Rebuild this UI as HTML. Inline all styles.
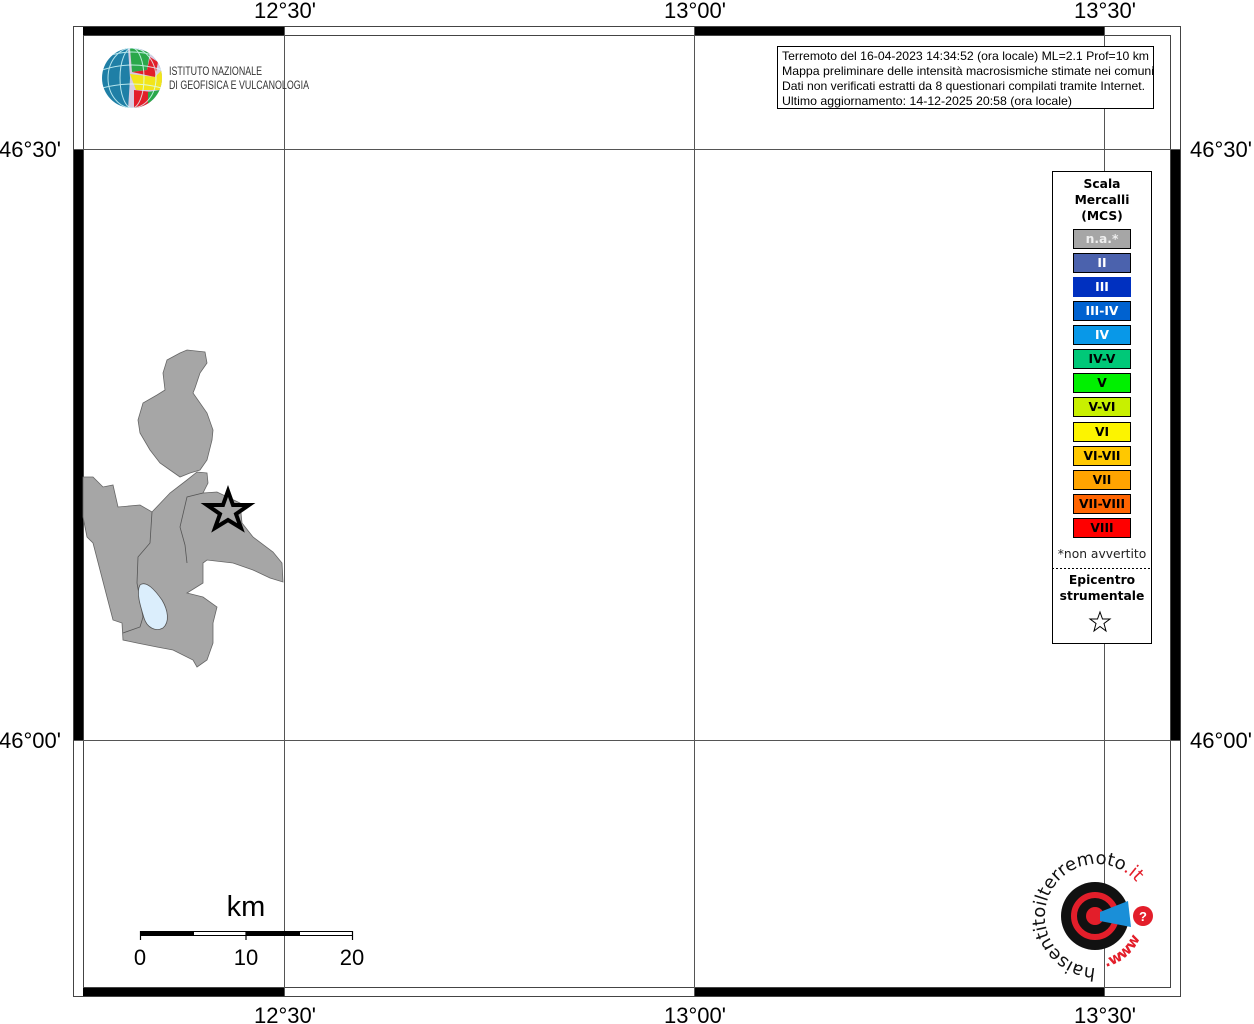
<!DOCTYPE html>
<html><head><meta charset="utf-8"><style>
html,body{margin:0;padding:0;background:#fff;}
svg{display:block;font-family:"Liberation Sans",sans-serif;}
.lg{font-family:"DejaVu Sans",sans-serif;font-weight:bold;font-size:12.3px;text-anchor:middle;}
</style></head><body>
<svg width="1254" height="1024" viewBox="0 0 1254 1024" xmlns="http://www.w3.org/2000/svg">
<rect width="1254" height="1024" fill="#fff"/>
<rect x="73.5" y="26.5" width="1107" height="970" fill="none" stroke="#444" stroke-width="1"/>
<rect x="83.5" y="35.5" width="1087" height="952" fill="none" stroke="#444" stroke-width="1"/>
<rect x="83" y="27" width="201" height="8" fill="#000"/>
<rect x="694" y="27" width="410" height="8" fill="#000"/>
<rect x="83" y="988" width="201" height="8" fill="#000"/>
<rect x="694" y="988" width="410" height="8" fill="#000"/>
<rect x="74" y="149" width="9" height="591" fill="#000"/>
<rect x="1171" y="149" width="9" height="591" fill="#000"/>
<g stroke="#555" stroke-width="1">
<line x1="284.5" y1="27" x2="284.5" y2="996"/>
<line x1="694.5" y1="27" x2="694.5" y2="996"/>
<line x1="1104.5" y1="27" x2="1104.5" y2="996"/>
<line x1="74" y1="149.5" x2="1180" y2="149.5"/>
<line x1="74" y1="740.5" x2="1180" y2="740.5"/>
</g>
<g font-size="22" text-anchor="middle" fill="#000">
<text x="285" y="18">12°30'</text><text x="695" y="18">13°00'</text><text x="1105" y="18">13°30'</text>
<text x="285" y="1023">12°30'</text><text x="695" y="1023">13°00'</text><text x="1105" y="1023">13°30'</text>
</g>
<g font-size="22" fill="#000">
<text x="-1" y="157">46°30'</text><text x="-1" y="748">46°00'</text>
<text x="1190" y="157">46°30'</text><text x="1190" y="748">46°00'</text>
</g>
<g fill="#a6a6a6" stroke="#666" stroke-width="0.8">
<path d="M167,360 L180,353 L187,350 L205,352 L207,363 L200,373 L195,388 L193,393 L207,413 L213,430 L212,440 L207,460 L200,470 L190,473 L180,477 L170,470 L160,463 L150,450 L140,433 L138,420 L143,403 L157,395 L165,390 L163,373 Z"/>
<path d="M83,477 L93,477 L103,487 L113,485 L118,507 L140,505 L152,512 L170,493 L187,480 L197,472 L207,473 L208,483 L203,493 L217,492 L240,503 L242,523 L253,537 L273,552 L282,563 L283,582 L270,578 L253,570 L233,563 L207,560 L203,563 L203,583 L187,593 L203,597 L217,607 L213,623 L213,643 L207,660 L197,667 L193,660 L173,650 L157,647 L137,643 L123,640 L122,623 L113,620 L107,597 L100,570 L93,543 L87,537 L83,517 Z"/>
</g>
<g fill="none" stroke="#555" stroke-width="0.8">
<path d="M152,512 L150,543 L138,557 L137,583 L143,617 L140,627 L123,633"/>
<path d="M203,493 L187,497 L180,527 L185,545 L187,563"/>
</g>
<path d="M140,585 C136,592 140,605 144,618 C147,628 156,632 163,628 C170,622 168,610 162,600 C155,590 146,580 140,585 Z" fill="#dbeefc" stroke="#555" stroke-width="0.8"/>
<polygon points="228,491 233,505 249,505 236,514 241,528 228,520 215,528 220,514 207,505 223,505" fill="#a6a6a6" stroke="#000" stroke-width="4" stroke-linejoin="miter"/>
<defs><clipPath id="gc"><circle cx="132" cy="78" r="30"/></clipPath></defs>
<g clip-path="url(#gc)">
<rect x="100" y="46" width="64" height="64" fill="#1f7fa6"/>
<polygon points="128,48 165,48 165,110 128,110 130,78" fill="#d8cce0"/>
<polygon points="130,48 150,52 147,70 132,72" fill="#2aa84a"/>
<polygon points="132,72 147,70 150,57 158,62 155,77" fill="#e31e2a"/>
<polygon points="130,74 155,77 160,90 136,90" fill="#f2e51a"/>
<polygon points="134,90 152,92 150,110 134,110" fill="#e31e2a"/>
<polygon points="148,92 160,90 158,110 148,110" fill="#2aa84a"/>
<polygon points="155,77 162,70 164,88 160,90" fill="#f2e51a"/>
</g>
<g fill="none" stroke="#dff" stroke-width="1" clip-path="url(#gc)" opacity="0.8">
<ellipse cx="132" cy="78" rx="12" ry="30"/><ellipse cx="132" cy="78" rx="24" ry="30"/>
<path d="M102,70 Q132,60 162,70 M102,88 Q132,80 162,88 M108,56 Q132,48 156,56"/>
</g>
<g font-size="12" fill="#333" transform="translate(169,0) scale(0.74,1)">
<text x="0" y="75">ISTITUTO NAZIONALE</text><text x="0" y="89">DI GEOFISICA E VULCANOLOGIA</text>
</g>
<rect x="777.5" y="46.5" width="376" height="62" fill="#fff" stroke="#000" stroke-width="1"/>
<g font-size="12" fill="#000" lengthAdjust="spacingAndGlyphs">
<text x="782" y="60" textLength="367" lengthAdjust="spacingAndGlyphs">Terremoto del 16-04-2023 14:34:52 (ora locale) ML=2.1 Prof=10 km</text>
<text x="782" y="75" textLength="372" lengthAdjust="spacingAndGlyphs">Mappa preliminare delle intensità macrosismiche stimate nei comuni</text>
<text x="782" y="90" textLength="363" lengthAdjust="spacingAndGlyphs">Dati non verificati estratti da 8 questionari compilati tramite Internet.</text>
<text x="782" y="105" textLength="290" lengthAdjust="spacingAndGlyphs">Ultimo aggiornamento: 14-12-2025 20:58 (ora locale)</text>
</g>
<rect x="1052.5" y="171.5" width="99" height="472" fill="#fff" stroke="#000" stroke-width="1"/>
<g class="lg" fill="#000">
<text x="1102" y="188">Scala</text><text x="1102" y="204">Mercalli</text><text x="1102" y="220">(MCS)</text>
</g>
<g stroke="#000" stroke-width="1">
<rect x="1073.5" y="229.5" width="57" height="19" fill="#a6a6a6"/>
<rect x="1073.5" y="253.5" width="57" height="19" fill="#4b62ad"/>
<rect x="1073.5" y="277.5" width="57" height="19" fill="#0030c0" stroke="#0030c0"/>
<rect x="1073.5" y="301.5" width="57" height="19" fill="#0062d0"/>
<rect x="1073.5" y="325.5" width="57" height="19" fill="#0898e8"/>
<rect x="1073.5" y="349.5" width="57" height="19" fill="#00c878"/>
<rect x="1073.5" y="373.5" width="57" height="19" fill="#00f000"/>
<rect x="1073.5" y="397.5" width="57" height="19" fill="#c8f000"/>
<rect x="1073.5" y="422.5" width="57" height="19" fill="#fcf400"/>
<rect x="1073.5" y="446.5" width="57" height="19" fill="#ffc800"/>
<rect x="1073.5" y="470.5" width="57" height="19" fill="#ffa400"/>
<rect x="1073.5" y="494.5" width="57" height="19" fill="#ff6400"/>
<rect x="1073.5" y="518.5" width="57" height="19" fill="#ff0000"/>
</g>
<g class="lg">
<text x="1102" y="243" fill="#eee">n.a.*</text>
<text x="1102" y="267" fill="#fff">II</text>
<text x="1102" y="291" fill="#fff">III</text>
<text x="1102" y="315" fill="#fff">III-IV</text>
<text x="1102" y="339" fill="#fff">IV</text>
<text x="1102" y="363" fill="#000">IV-V</text>
<text x="1102" y="387" fill="#000">V</text>
<text x="1102" y="411" fill="#000">V-VI</text>
<text x="1102" y="436" fill="#000">VI</text>
<text x="1102" y="460" fill="#000">VI-VII</text>
<text x="1102" y="484" fill="#000">VII</text>
<text x="1102" y="508" fill="#000">VII-VIII</text>
<text x="1102" y="532" fill="#000">VIII</text>
</g>
<text x="1102" y="558" font-family="DejaVu Sans,sans-serif" font-size="12.3" text-anchor="middle" fill="#222">*non avvertito</text>
<line x1="1052" y1="568.5" x2="1151" y2="568.5" stroke="#000" stroke-dasharray="2,2"/>
<g class="lg" fill="#000"><text x="1102" y="584">Epicentro</text><text x="1102" y="600">strumentale</text></g>
<polygon points="1100,612 1102.5,619 1110,619 1104,623.5 1106,631 1100,626.5 1094,631 1096,623.5 1090,619 1097.5,619" fill="#fff" stroke="#000" stroke-width="1"/>
<text x="246" y="916" font-size="29" text-anchor="middle">km</text>
<rect x="140" y="931" width="53" height="5" fill="#000"/>
<rect x="193.5" y="931.5" width="53" height="4" fill="#fff" stroke="#000" stroke-width="1"/>
<rect x="246" y="931" width="53" height="5" fill="#000"/>
<rect x="299.5" y="931.5" width="53" height="4" fill="#fff" stroke="#000" stroke-width="1"/>
<g stroke="#000" stroke-width="1.2"><line x1="140.5" y1="931" x2="140.5" y2="940"/><line x1="246" y1="931" x2="246" y2="940"/><line x1="352.5" y1="931" x2="352.5" y2="940"/></g>
<g font-size="22" text-anchor="middle"><text x="140" y="965">0</text><text x="246" y="965">10</text><text x="352" y="965">20</text></g>
<circle cx="1095" cy="916" r="34" fill="#111"/>
<circle cx="1095" cy="916" r="21" fill="none" stroke="#e31e2a" stroke-width="6"/>
<circle cx="1095" cy="916" r="9" fill="#e31e2a"/>
<polygon points="1100,912 1128,901 1131,927 1100,921" fill="#1a8fd8"/>
<circle cx="1143" cy="916" r="10" fill="#e31e2a"/>
<text x="1143" y="921" font-size="13" font-weight="bold" fill="#fff" text-anchor="middle">?</text>
<defs><path id="arc" d="M1098,968 A52,52 0 1,1 1143,892"/></defs>
<text font-size="18" font-family="DejaVu Sans,sans-serif" fill="#111"><textPath href="#arc" startOffset="1%">haisentitoilterremoto<tspan fill="#e31e2a">.it</tspan></textPath></text>
<defs><path id="arc2" d="M1140,938 A50,50 0 0,1 1100,968"/></defs>
<text font-size="15" font-family="DejaVu Sans,sans-serif" font-weight="bold" fill="#e31e2a" rotate="180"><textPath href="#arc2">www.</textPath></text>
</svg>
</body></html>
